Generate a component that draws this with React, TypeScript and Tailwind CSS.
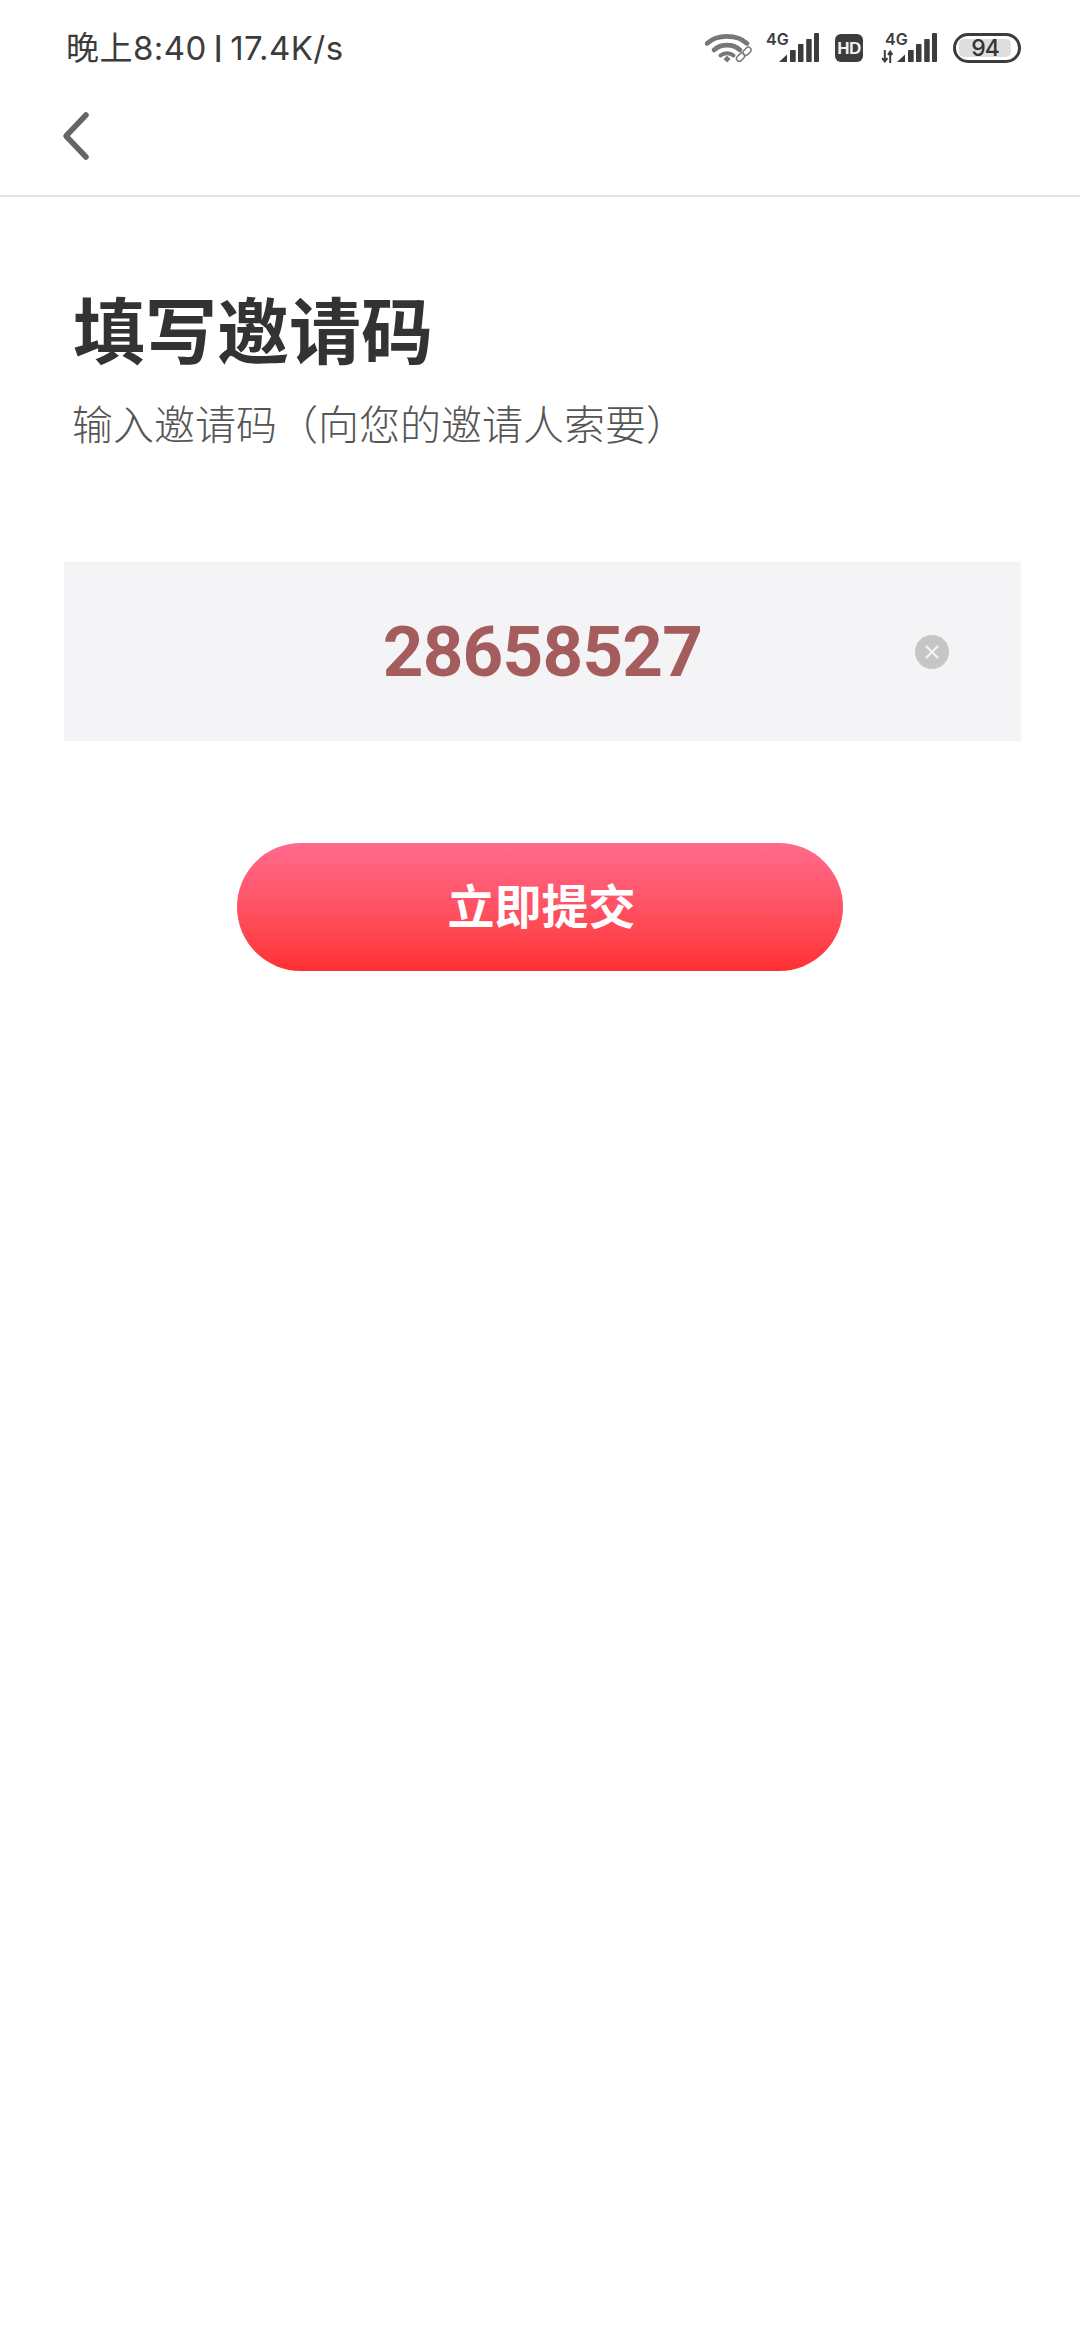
const CJK = 'font-["Inter","Noto_Sans_CJK_SC",sans-serif]';

function SignalBars({ className }: { className?: string }) {
  return (
    <svg viewBox="0 0 40 30" className={className} fill="#3c3c3c">
      <path d="M0 29 L8 21.5 V29 Z" />
      <rect x="11" y="17" width="5.7" height="12" rx="0.8" />
      <rect x="19" y="11" width="5.5" height="18" rx="0.8" />
      <rect x="27.2" y="6" width="5.5" height="23" rx="0.8" />
      <rect x="35" y="0" width="5" height="29" rx="0.8" />
    </svg>
  );
}

function WifiLink() {
  return (
    <svg viewBox="0 0 48 30" className="h-[30px] w-[48px]" fill="none">
      <path d="M2 10.5 C12 1 32 1 42 10.5" stroke="#777" strokeWidth="4.6" strokeLinecap="round" />
      <path d="M9 17 C16 10.5 28 10.5 35 17" stroke="#777" strokeWidth="4.6" strokeLinecap="round" />
      <path d="M15.5 22.5 C19 19.5 25 19.5 28.5 22.5" stroke="#777" strokeWidth="4" strokeLinecap="round" />
      <path d="M18.5 26 L22 22.8 L25.5 26 L22 29.5 Z" fill="#777" />
      <g stroke="#777" strokeWidth="1.5">
        <rect x="31" y="21.5" width="9" height="5.5" rx="2.7" transform="rotate(-45 35.5 24.2)" />
        <rect x="37.5" y="15.5" width="9" height="5.5" rx="2.7" transform="rotate(-45 42 18.2)" />
      </g>
    </svg>
  );
}

function StatusIcons() {
  return (
    <div className="flex items-center">
      <WifiLink />
      <div className="relative ml-[13px] h-[30px] w-[53px]">
        <span className='absolute left-0 top-[-3px] font-["Inter",sans-serif] text-[16px] leading-[18px] font-semibold text-[#3c3c3c]'>4G</span>
        <SignalBars className="absolute right-0 top-0 h-[30px] w-[40px]" />
      </div>
      <div className='ml-[16px] flex h-[28px] w-[28px] items-center justify-center rounded-[6px] bg-[#3c3c3c] font-["Liberation_Sans",sans-serif] text-[17px] leading-none font-bold tracking-[-0.5px] text-[#f0f0f0]'>
        HD
      </div>
      <div className="relative ml-[18px] h-[30px] w-[56px]">
        <span className='absolute left-[4px] top-[-3px] font-["Inter",sans-serif] text-[16px] leading-[18px] font-semibold text-[#3c3c3c]'>4G</span>
        <svg viewBox="0 0 12 12" className="absolute left-0 bottom-0 h-[13px] w-[13px]" fill="none" stroke="#3c3c3c" strokeWidth="1.8">
          <path d="M3.5 0 V10 M1 7.5 L3.5 10.5 L6 7.5" />
          <path d="M8.5 12 V2 M6.5 4.5 L8.5 1.5 L10.5 4.5" />
        </svg>
        <SignalBars className="absolute right-0 top-0 h-[30px] w-[40px]" />
      </div>
      <div className="ml-[16px] flex h-[30px] w-[68px] items-center rounded-full border-[3px] border-[#3c3c3c] p-[3px]">
        <div className='flex h-full w-[52px] items-center justify-center rounded-[5px] bg-[#dedede] font-["Inter",sans-serif] text-[23px] leading-none font-medium tracking-[-1px] text-[#333]'>
          94
        </div>
      </div>
    </div>
  );
}

export default function App() {
  return (
    <div className={`flex h-[2340px] w-[1080px] flex-col bg-white ${CJK}`}>
      {/* Status bar */}
      <div className="flex h-[96px] items-center justify-between pr-[59px] pl-[66px]">
        <span className="flex items-center text-[33px] leading-none font-normal tracking-[0.45px] whitespace-nowrap text-[#3c3c3c]">
          晚上8:40
          <span className="mx-[7px] inline-block h-[27px] overflow-hidden text-[24px] leading-[27px] font-bold">|</span>
          17.4K/s
        </span>
        <StatusIcons />
      </div>

      {/* Nav */}
      <div className="h-[101px] border-b-[2px] border-[#e2e2e2] pt-[14px] pl-[60px]">
        <svg viewBox="0 0 30 52" className="h-[52px] w-[30px]" fill="none" stroke="#666" strokeWidth="5.5" strokeLinecap="round" strokeLinejoin="round">
          <path d="M26 5 L6 26 L26 47" />
        </svg>
      </div>

      {/* Form */}
      <div className='flex flex-col px-[64px] font-["Roboto","Noto_Sans_CJK_SC",sans-serif]'>
        <h1 className="mt-[101px] ml-[9px] text-[72px] leading-[72px] font-bold text-[#333]">填写邀请码</h1>
        <p className="mt-[36px] ml-[8px] text-[41px] leading-[41px] font-light whitespace-nowrap text-[#555]">输入邀请码（向您的邀请人索要）</p>

        <div className="relative mt-[115px] flex h-[179px] w-[957px] items-center justify-center bg-[#f4f4f7]">
          <span className="text-[71px] leading-none font-bold tracking-[-0.8px] text-[#a55c5c]">28658527</span>
          <div className="absolute top-[73px] right-[72px] flex h-[34px] w-[34px] items-center justify-center rounded-full bg-[#c6c6c6]">
            <svg viewBox="0 0 14 14" className="h-[14px] w-[14px]" stroke="#f4f4f7" strokeWidth="2.2" strokeLinecap="round">
              <path d="M1.5 1.5 L12.5 12.5 M12.5 1.5 L1.5 12.5" />
            </svg>
          </div>
        </div>

        <button className="mt-[102px] ml-[173px] flex h-[128px] w-[606px] items-center justify-center rounded-full bg-gradient-to-b from-[#ff6a8c] to-[#ff2f2f] pl-[3px] text-[47px] leading-none font-semibold text-white">
          立即提交
        </button>
      </div>
    </div>
  );
}
